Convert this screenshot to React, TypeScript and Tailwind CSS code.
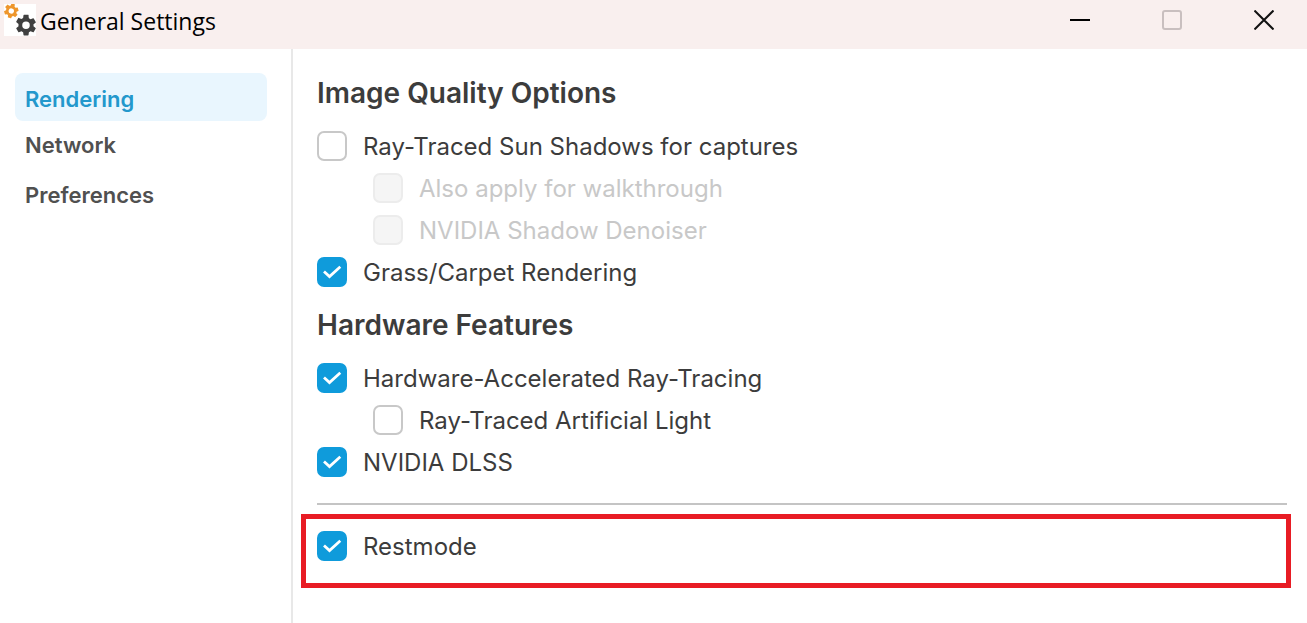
import { useState } from 'react';

const GEAR =
  'M19.14 12.94a7.1 7.1 0 0 0 .05-.94 7.1 7.1 0 0 0-.06-.94l2.03-1.58a.5.5 0 0 0 .12-.61l-1.92-3.32a.5.5 0 0 0-.59-.22l-2.39.96a7 7 0 0 0-1.62-.94l-.36-2.54A.48.48 0 0 0 13.92 2h-3.84a.48.48 0 0 0-.47.41l-.36 2.54a7.2 7.2 0 0 0-1.62.94l-2.39-.96a.48.48 0 0 0-.59.22L2.74 8.47a.47.47 0 0 0 .12.61l2.03 1.58a7.4 7.4 0 0 0-.07 1.34c0 .31.02.64.07.94l-2.03 1.58a.5.5 0 0 0-.12.61l1.92 3.32c.12.22.37.29.59.22l2.39-.96c.5.38 1.03.7 1.62.94l.36 2.54c.05.24.24.41.48.41h3.84c.24 0 .44-.17.47-.41l.36-2.54a7 7 0 0 0 1.62-.94l2.39.96c.22.08.47 0 .59-.22l1.92-3.32a.47.47 0 0 0-.12-.61zM12 15.6a3.6 3.6 0 1 1 0-7.2 3.6 3.6 0 0 1 0 7.2z';

const AppLogo = () => (
  <svg viewBox="0 0 32 32" className="h-8 w-8 shrink-0 bg-white" aria-hidden="true">
    <g transform="translate(7.3 7) rotate(15) scale(.74) translate(-12 -12)">
      <path d={GEAR} fill="#ee962c" fillRule="evenodd" />
    </g>
    <g transform="translate(22 21.3) scale(1.05) translate(-12 -12)">
      <path d={GEAR} fill="#404040" fillRule="evenodd" />
    </g>
  </svg>
);

const TitleBar = () => (
  <header className="flex h-[49px] items-start justify-between bg-[#f9efee] pr-[33px] pl-1">
    <div className="flex gap-1 pt-1">
      <AppLogo />
      <h1 className="pt-px font-['Open_Sans','Noto_Sans',sans-serif] text-[23px] leading-8 text-black">General Settings</h1>
    </div>
    <div className="flex gap-18">
      <button type="button" aria-label="Minimize" className="flex h-10 w-5 items-center justify-center">
        <svg viewBox="0 0 20 20" className="h-5 w-5">
          <path d="M0 10H20" stroke="#000" strokeWidth="2" />
        </svg>
      </button>
      <button type="button" aria-label="Maximize" disabled className="flex h-10 w-5 items-center justify-center">
        <svg viewBox="0 0 20 20" className="h-5 w-5" fill="none">
          <rect x="1" y="1" width="18" height="18" rx="2" stroke="#c9bfbf" strokeWidth="2" />
        </svg>
      </button>
      <button type="button" aria-label="Close" className="flex h-10 w-5 items-center justify-center">
        <svg viewBox="0 0 20 20" className="h-5 w-5">
          <path d="M0.5 0.5L19.5 19.5M19.5 0.5L0.5 19.5" stroke="#111" strokeWidth="2" />
        </svg>
      </button>
    </div>
  </header>
);

const Option = ({
  id,
  label,
  initial = false,
  nested = false,
  disabled = false,
}: {
  id: string;
  label: string;
  initial?: boolean;
  nested?: boolean;
  disabled?: boolean;
}) => {
  const [checked, setChecked] = useState(initial);

  return (
    <div className={`flex h-[42px] items-center gap-4 ${nested ? 'pl-14' : ''}`}>
      <span className="relative flex h-[30px] w-[30px] shrink-0">
        <input
          id={id}
          type="checkbox"
          checked={checked}
          disabled={disabled}
          onChange={(e) => setChecked(e.target.checked)}
          className="h-[30px] w-[30px] appearance-none rounded-[7px] border-2 border-[#c8c8c8] bg-white checked:border-[#0f9bdb] checked:bg-[#0f9bdb] disabled:border-[#ececec] disabled:bg-[#f5f5f5]"
        />
        {checked && (
          <svg viewBox="0 0 30 30" fill="none" className="pointer-events-none absolute inset-0 h-[30px] w-[30px]">
            <path d="M7 14.5L12.5 19.5L23.3 9.8" stroke="#fff" strokeWidth="2.8" />
          </svg>
        )}
      </span>
      <label htmlFor={id} className={`pt-0.5 text-2xl whitespace-nowrap ${disabled ? 'text-[#c8c8c8]' : 'text-[#3c3c3c]'}`}>
        {label}
      </label>
    </div>
  );
};

const SectionTitle = ({ children }: { children: React.ReactNode }) => (
  <h2 className="flex h-16 items-center text-[28px] font-semibold text-[#3c3c3c]">{children}</h2>
);

export default function App() {
  return (
    <div className="flex min-h-screen flex-col bg-white font-['Inter',sans-serif]">
      <TitleBar />
      <div className="flex flex-1">
        <nav className="flex w-[293px] shrink-0 flex-col border-r-2 border-[#e8e8e8] pt-6 pr-6 pl-[15px] text-[22px] font-semibold text-[#505050]">
          <a href="#rendering" aria-current="page" className="flex h-12 items-center rounded-lg bg-[#e9f6fe] px-[10px] pt-1 text-[#2398cc]">
            Rendering
          </a>
          <a href="#network" className="flex h-12 items-center px-[10px]">
            Network
          </a>
          <a href="#preferences" className="mt-0.5 flex h-12 items-center px-[10px]">
            Preferences
          </a>
        </nav>

        <main className="min-w-0 flex-1 pt-3 pr-5 pl-6">
          <section>
            <SectionTitle>Image Quality Options</SectionTitle>
            <Option id="sun-shadows" label="Ray-Traced Sun Shadows for captures" />
            <Option id="walkthrough" label="Also apply for walkthrough" nested disabled />
            <Option id="denoiser" label="NVIDIA Shadow Denoiser" nested disabled />
            <Option id="grass" label="Grass/Carpet Rendering" initial />
          </section>

          <section>
            <SectionTitle>Hardware Features</SectionTitle>
            <Option id="ray-tracing" label="Hardware-Accelerated Ray-Tracing" initial />
            <Option id="artificial-light" label="Ray-Traced Artificial Light" nested />
            <Option id="dlss" label="NVIDIA DLSS" initial />
          </section>

          <hr className="mt-5 border-t-2 border-[#c4c4c4]" />

          {/* highlighted option */}
          <div className="mt-[9px] -mr-1 -ml-4 border-5 border-[#e81c24] pt-1.5 pb-4 pl-[11px]">
            <Option id="restmode" label="Restmode" initial />
          </div>
        </main>
      </div>
    </div>
  );
}
